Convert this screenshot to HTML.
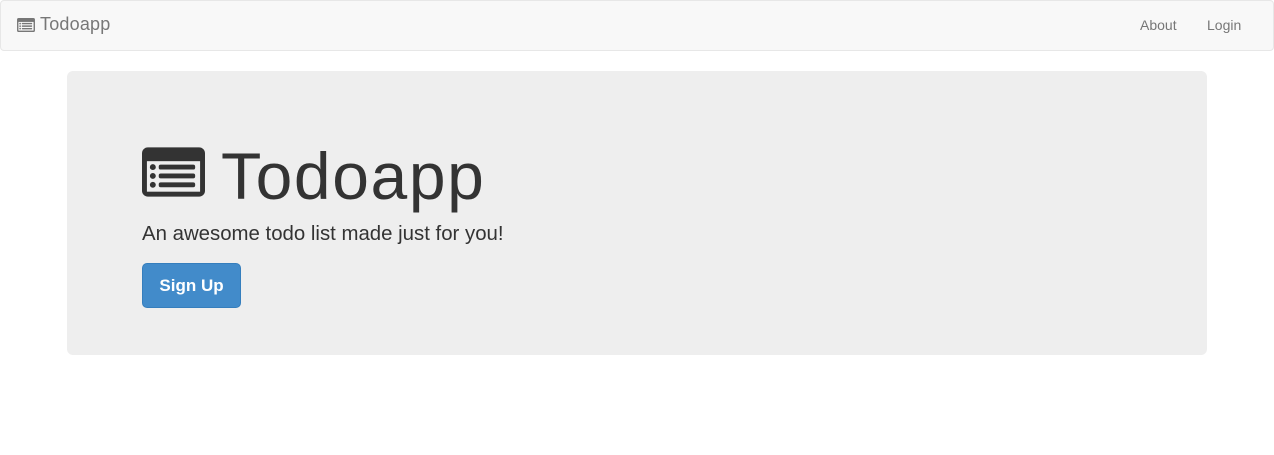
<!DOCTYPE html>
<html><head><style>
body{margin:0;font-family:"Liberation Sans",Arial,sans-serif;background:#fff;width:1274px;height:455px;overflow:hidden}
.nav{position:absolute;left:0;top:0;width:1272px;height:49px;background:#f8f8f8;border:1px solid #e7e7e7;border-radius:4px}
.brand{position:absolute;left:16px;top:13px;font-size:18px;color:#777;display:flex;align-items:center;letter-spacing:0.2px}
.brand svg{margin-right:5px}
.links{position:absolute;right:0;top:16px;font-size:14px;color:#777}
.links span{position:absolute;white-space:nowrap}
.jumbo{position:absolute;left:67px;top:71px;width:1140px;height:284px;background:#eee;border-radius:6px}
h1{position:absolute;left:75px;top:62px;margin:0;font-size:66px;font-weight:normal;color:#333;line-height:80px;white-space:nowrap;letter-spacing:1.6px}
h1 svg{position:absolute;left:0;top:14px}
h1 span{position:absolute;left:79px;top:3px}
p{position:absolute;left:75px;top:152px;margin:0;font-size:20.4px;color:#333;white-space:nowrap}
.btn{position:absolute;left:75px;top:192px;width:97px;height:43px;background:#428bca;border:1px solid #357ebd;border-radius:5px;color:#fff;font-size:17px;font-weight:bold;line-height:43px;text-align:center}
</style></head><body>
<div class="nav">
<div class="brand"><svg width="18" height="14" viewBox="0 0 64 50"><rect width="64" height="50" rx="6" fill="#777"/><rect x="5" y="14" width="54" height="31" fill="#f8f8f8"/><circle cx="11" cy="20" r="3" fill="#777"/><circle cx="11" cy="29" r="3" fill="#777"/><circle cx="11" cy="38" r="3" fill="#777"/><rect x="17" y="17.5" width="37" height="5" rx="2" fill="#777"/><rect x="17" y="26.5" width="37" height="5" rx="2" fill="#777"/><rect x="17" y="35.5" width="37" height="5" rx="2" fill="#777"/></svg>Todoapp</div>
<div class="links"><span style="left:-133px">About</span><span style="left:-66px">Login</span></div>
</div>
<div class="jumbo">
<h1><svg width="63" height="50" viewBox="0 0 64 50"><rect width="64" height="50" rx="6" fill="#333"/><rect x="5" y="14" width="54" height="31" fill="#eee"/><circle cx="11" cy="20" r="3" fill="#333"/><circle cx="11" cy="29" r="3" fill="#333"/><circle cx="11" cy="38" r="3" fill="#333"/><rect x="17" y="17.5" width="37" height="5" rx="2" fill="#333"/><rect x="17" y="26.5" width="37" height="5" rx="2" fill="#333"/><rect x="17" y="35.5" width="37" height="5" rx="2" fill="#333"/></svg><span>Todoapp</span></h1>
<p>An awesome todo list made just for you!</p>
<div class="btn">Sign Up</div>
</div>
</body></html>
